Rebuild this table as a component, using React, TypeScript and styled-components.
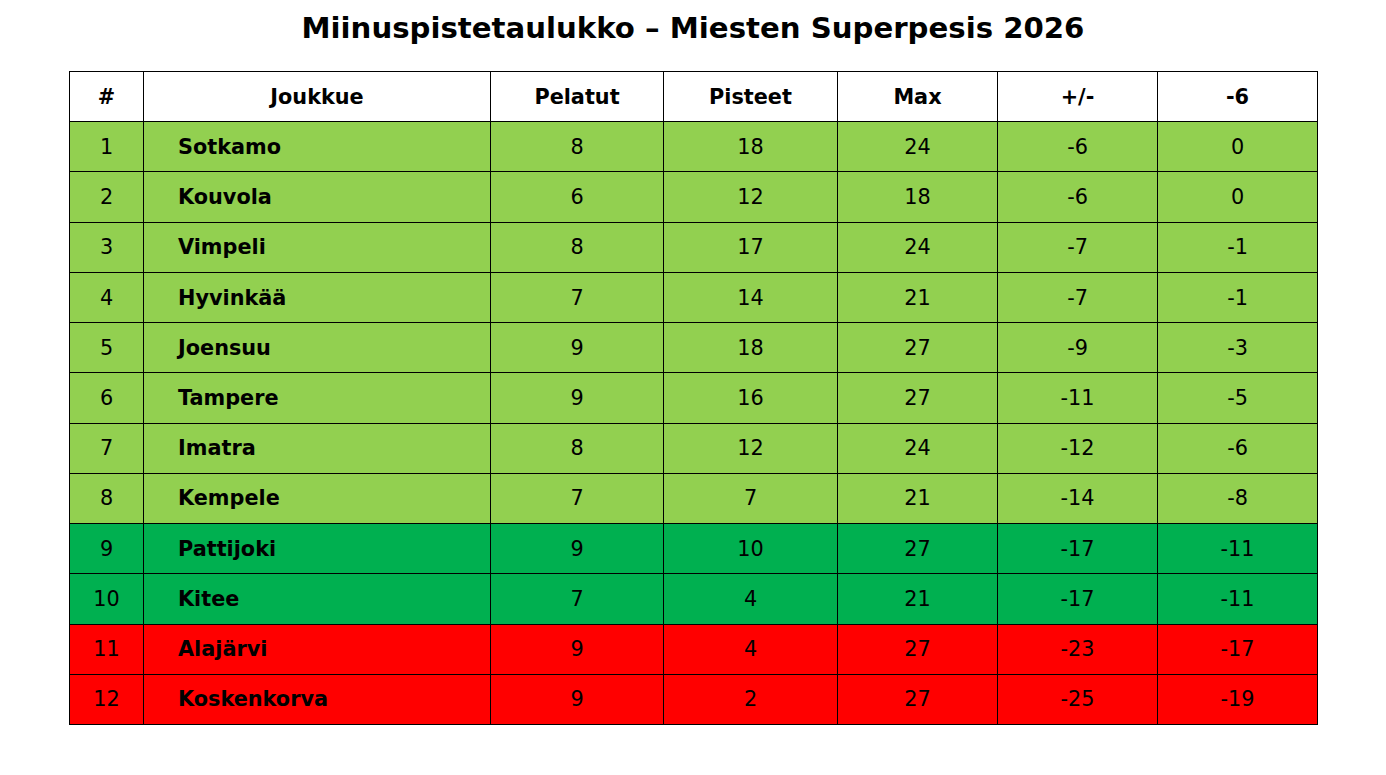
import React from "react";
import styled, { createGlobalStyle } from "styled-components";

const Global = createGlobalStyle`
  html, body { margin: 0; padding: 0; background: #ffffff; }
  body { font-family: "DejaVu Sans", "Liberation Sans", sans-serif; color: #000; }
`;

const Page = styled.div`
  width: 1386px;
  height: 775px;
  display: flex;
  flex-direction: column;
`;

const Title = styled.h1`
  margin: 0;
  padding-top: 11px;
  height: 71px;
  box-sizing: border-box;
  line-height: 34px;
  font-size: 29.2px;
  font-weight: bold;
  text-align: center;
`;

const Grid = styled.div`
  display: grid;
  grid-template-columns: 74px 347px 173px 174px 160px 160px 160px;
  grid-template-rows: repeat(13, 1fr);
  width: 1249px;
  height: 654px;
  box-sizing: border-box;
  border-left: 1px solid #000;
  border-top: 1px solid #000;
  margin-left: 69px;
`;

type Tone = "head" | "light" | "green" | "red";
const bg: Record<Tone, string> = {
  head: "#ffffff",
  light: "#92d050",
  green: "#00b050",
  red: "#ff0000",
};

const Cell = styled.div<{ $tone: Tone; $bold?: boolean; $left?: boolean }>`
  background: ${(p) => bg[p.$tone]};
  border-right: 1px solid #000;
  border-bottom: 1px solid #000;
  display: flex;
  align-items: center;
  justify-content: ${(p) => (p.$left ? "flex-start" : "center")};
  padding-left: ${(p) => (p.$left ? "34px" : "0")};
  font-size: 20.8px;
  font-weight: ${(p) => (p.$bold ? "bold" : "normal")};
  white-space: nowrap;
`;

const headers = ["#", "Joukkue", "Pelatut", "Pisteet", "Max", "+/-", "-6"];

const rows: [number, string, number, number, number, number, number][] = [
  [1, "Sotkamo", 8, 18, 24, -6, 0],
  [2, "Kouvola", 6, 12, 18, -6, 0],
  [3, "Vimpeli", 8, 17, 24, -7, -1],
  [4, "Hyvinkää", 7, 14, 21, -7, -1],
  [5, "Joensuu", 9, 18, 27, -9, -3],
  [6, "Tampere", 9, 16, 27, -11, -5],
  [7, "Imatra", 8, 12, 24, -12, -6],
  [8, "Kempele", 7, 7, 21, -14, -8],
  [9, "Pattijoki", 9, 10, 27, -17, -11],
  [10, "Kitee", 7, 4, 21, -17, -11],
  [11, "Alajärvi", 9, 4, 27, -23, -17],
  [12, "Koskenkorva", 9, 2, 27, -25, -19],
];

const toneFor = (rank: number): Tone =>
  rank <= 8 ? "light" : rank <= 10 ? "green" : "red";

export default function App() {
  return (
    <Page>
      <Global />
      <Title>Miinuspistetaulukko – Miesten Superpesis 2026</Title>
      <Grid>
        {headers.map((h) => (
          <Cell key={h} $tone="head" $bold>
            {h}
          </Cell>
        ))}
        {rows.map((r) => {
          const tone = toneFor(r[0]);
          return r.map((v, i) => (
            <Cell key={`${r[0]}-${i}`} $tone={tone} $bold={i === 1} $left={i === 1}>
              {v}
            </Cell>
          ));
        })}
      </Grid>
    </Page>
  );
}
